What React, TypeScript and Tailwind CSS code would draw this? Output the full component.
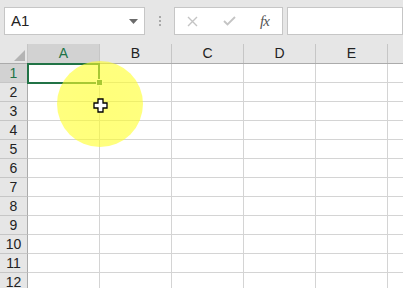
import React from "react";

const cols = ["A", "B", "C", "D", "E"];
const rows = Array.from({ length: 12 }, (_, i) => i + 1);

export default function App() {
  return (
    <div className="relative w-[403px] h-[288px] overflow-hidden bg-[#e6e6e6] font-['Liberation_Sans',Arial,sans-serif] select-none">
      {/* toolbar */}
      <div className="flex items-center pt-[7px] h-[35px]">
        <div className="ml-[4px] w-[141px] h-[28px] bg-white border border-[#c6c6c6] flex items-center justify-between pl-[6px] pr-[6px]">
          <span className="text-[15px] text-[#222]">A1</span>
          <svg width="9" height="5" viewBox="0 0 9 5"><path d="M0 0 L9 0 L4.5 5 Z" fill="#6b6b6b" /></svg>
        </div>
        <div className="ml-[14px] flex flex-col gap-[2px] w-[3px]">
          <div className="w-[2px] h-[2px] bg-[#a8a8a8]" />
          <div className="w-[2px] h-[2px] bg-[#a8a8a8]" />
          <div className="w-[2px] h-[2px] bg-[#a8a8a8]" />
        </div>
        <div className="ml-[12px] w-[109px] h-[28px] bg-white border border-[#c6c6c6] flex items-center">
          <svg className="ml-[12px]" width="11" height="11" viewBox="0 0 11 11"><path d="M1 1 L10 10 M10 1 L1 10" stroke="#c4c4c4" strokeWidth="1.4" /></svg>
          <svg className="ml-[25px]" width="13" height="10" viewBox="0 0 13 10"><path d="M1 5 L4.5 8.5 L12 1" stroke="#c4c4c4" strokeWidth="1.8" fill="none" /></svg>
          <span className="ml-[24px] text-[15px] italic text-[#555] font-['Liberation_Serif',serif] tracking-[-1px]">fx</span>
        </div>
        <div className="ml-[4px] flex-1 h-[28px] bg-white border border-[#c6c6c6]" />
      </div>

      {/* grid */}
      <div className="mt-[9px] bg-white">
        {/* header row */}
        <div className="flex h-[20px] bg-[#e6e6e6] border-b border-[#ababab]">
          <div className="relative w-[28px] shrink-0 border-r border-[#c6c6c6]">
            <svg className="absolute right-[2px] bottom-[2px]" width="11" height="11" viewBox="0 0 11 11"><path d="M11 0 L11 11 L0 11 Z" fill="#b4b4b4" /></svg>
          </div>
          {cols.map((c, i) => (
            <div
              key={c}
              className={`w-[72px] shrink-0 border-r border-[#c6c6c6] flex items-center justify-center text-[14px] ${i === 0 ? "bg-[#d2d2d2] text-[#217346]" : "text-[#222]"}`}
            >
              {c}
            </div>
          ))}
          <div className="flex-1" />
        </div>
        {rows.map((r) => (
          <div key={r} className="flex h-[19px]">
            <div
              className={`w-[28px] shrink-0 border-r border-b border-[#ababab] border-b-[#c6c6c6] flex items-center justify-center text-[14px] ${r === 1 ? "bg-[#d2d2d2] text-[#217346]" : "bg-[#e6e6e6] text-[#222]"}`}
            >
              {r}
            </div>
            {cols.map((c) => (
              <div key={c} className="w-[72px] shrink-0 border-r border-b border-[#d4d4d4]" />
            ))}
            <div className="flex-1 border-b border-[#d4d4d4]" />
          </div>
        ))}
      </div>

      {/* selection */}
      <div className="absolute left-[27px] top-[63px] w-[73px] h-[21px] border-2 border-[#217346]" />
      <div className="absolute left-[96px] top-[79px] w-[7px] h-[7px] bg-[#217346] border border-white" />

      {/* cursor highlight */}
      <div className="absolute left-[57px] top-[61px] w-[86px] h-[86px] rounded-full bg-[radial-gradient(circle,rgba(255,255,40,0.62)_0%,rgba(255,255,40,0.6)_72%,rgba(255,255,40,0.3)_90%,rgba(255,255,40,0)_100%)]" />

      {/* cursor */}
      <svg className="absolute left-[93px] top-[98px]" width="15" height="15" viewBox="0 0 15 15">
        <path d="M5 1 H10 V5 H14 V10 H10 V14 H5 V10 H1 V5 H5 Z" fill="white" stroke="black" strokeWidth="1.3" />
      </svg>
    </div>
  );
}
